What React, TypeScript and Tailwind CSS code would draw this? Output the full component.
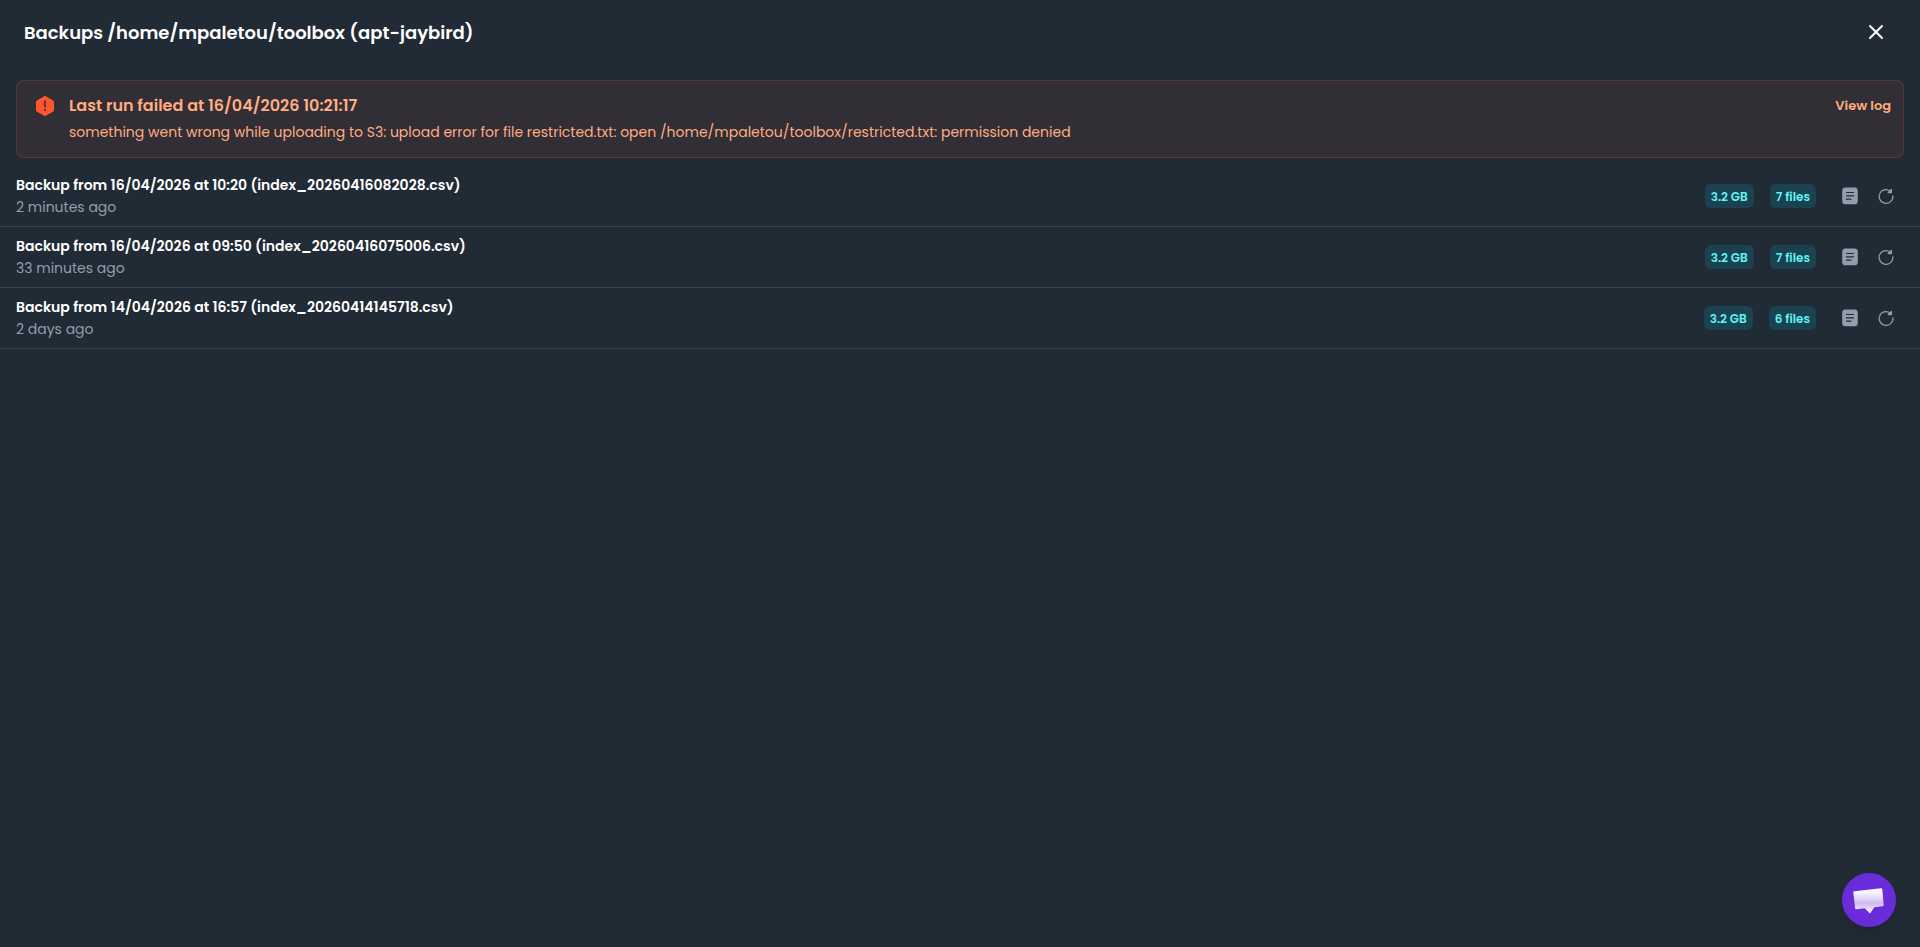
import React from 'react';
import { X } from 'lucide-react';

const backups = [
    { file: 'index_20260416082028.csv', date: '16/04/2026 at 10:20', ago: '2 minutes ago', size: '3.2 GB', files: '7 files' },
    { file: 'index_20260416075006.csv', date: '16/04/2026 at 09:50', ago: '33 minutes ago', size: '3.2 GB', files: '7 files' },
    { file: 'index_20260414145718.csv', date: '14/04/2026 at 16:57', ago: '2 days ago', size: '3.2 GB', files: '6 files' },
];

function DangerIcon() {
    return (
        <svg viewBox="0 0 24 24" className="h-[26px] w-6 shrink-0" aria-hidden="true">
            <path
                fill="#ff5630"
                fillRule="evenodd"
                d="M9.6 3.2C10.8 2.4 11.4 2 12 2s1.2.4 2.4 1.2l4.2 2.2C20.4 6.500 21 7 21 8.600v6.800c0 1.600-.6 2.100-2.400 3.200l-4.200 2.200C13.200 21.600 12.600 22 12 22s-1.200-.4-2.400-1.200l-4.200-2.200C3.600 17.500 3 17 3 15.400V8.600c0-1.600.6-2.100 2.400-3.200zM12 6.250a.75.75 0 0 1 .75.75v6a.75.75 0 0 1-1.500 0V7a.75.75 0 0 1 .75-.75M12 17a1 1 0 1 0 0-2 1 1 0 0 0 0 2"
                clipRule="evenodd"
            />
        </svg>
    );
}

function LogIcon() {
    return (
        <svg viewBox="0 0 20 20" className="size-5" aria-hidden="true">
            <rect x="2.200" y="1.500" width="15.600" height="16.800" rx="3.400" fill="currentColor" />
            <path d="M6.500 6.500h7M6.500 9.900h7M6.500 13.200h4.400" stroke="#212b36" strokeWidth="1.200" strokeLinecap="round" />
        </svg>
    );
}

function RestoreIcon() {
    return (
        <svg viewBox="0 0 20 20" className="size-5" fill="none" stroke="currentColor" strokeWidth="1.250" strokeLinecap="round" strokeLinejoin="round" aria-hidden="true">
            <path d="M15.400 6.100A6.900 6.900 0 1 0 16.900 9.800" />
            <path d="M15.400 3.400v3.100h-3.200z" fill="currentColor" />
        </svg>
    );
}

function Badge({ children }: any) {
    return (
        <span className="inline-flex h-6 items-center rounded-md bg-[#00b8d9]/16 px-1.5 text-xs leading-[17px] font-semibold whitespace-nowrap text-[#61f3f3]">
            {children}
        </span>
    );
}

export default function App() {
    return (
        <div className="flex min-h-screen flex-col bg-[#212b36] font-['Poppins','Inter',sans-serif] text-white">
            <header className="flex h-16 items-center justify-between px-6">
                <h1 className="text-lg leading-[27px] font-semibold">Backups /home/mpaletou/toolbox (apt-jaybird)</h1>
                <button type="button" aria-label="Close" className="flex size-10 items-center justify-center">
                    <X size={24} strokeWidth={2} />
                </button>
            </header>

            <div role="alert" className="mx-4 mt-4 mb-2 flex gap-3 rounded-lg border border-[#ff5630]/20 bg-[#ff5630]/8 py-3 pr-3 pl-4 text-[#ffac82]">
                <DangerIcon />
                <div className="grow">
                    <h2 className="text-base leading-[26px] font-semibold">Last run failed at 16/04/2026 10:21:17</h2>
                    <p className="text-sm leading-[26px]">
                        something went wrong while uploading to S3: upload error for file restricted.txt: open /home/mpaletou/toolbox/restricted.txt: permission denied
                    </p>
                </div>
                <button type="button" className="h-[26px] self-start text-[13px] font-semibold whitespace-nowrap">View log</button>
            </div>

            <ul>
                {backups.map((b) => (
                    <li key={b.file} className="flex items-center gap-4 border-b border-[#919eab]/20 px-4 py-2">
                        <div className="grow text-sm leading-[22px]">
                            <p className="font-semibold">Backup from {b.date} ({b.file})</p>
                            <p className="text-[#919eab]">{b.ago}</p>
                        </div>
                        <Badge>{b.size}</Badge>
                        <Badge>{b.files}</Badge>
                        <div className="flex text-[#919eab]">
                            <button type="button" aria-label="View log" className="flex size-9 items-center justify-center"><LogIcon /></button>
                            <button type="button" aria-label="Restore" className="flex size-9 items-center justify-center"><RestoreIcon /></button>
                        </div>
                    </li>
                ))}
            </ul>

            <button type="button" aria-label="Open chat" className="fixed right-6 bottom-5 flex size-[54px] items-center justify-center rounded-full bg-[#6a2bd9] shadow-lg">
                <svg viewBox="0 0 54 54" className="size-full" aria-hidden="true">
                    <defs>
                        <linearGradient id="bubble" x1="0" y1="0" x2="0" y2="1">
                            <stop offset="0" stopColor="#fff" />
                            <stop offset="0.200" stopColor="#f6f1fc" />
                            <stop offset="0.600" stopColor="#cdb9f0" />
                            <stop offset="0.800" stopColor="#e6dbf8" />
                            <stop offset="1" stopColor="#fff" />
                        </linearGradient>
                    </defs>
                    <path d="M12.300 18.200 39 15.200q1.200-.1 1.300 1l1.400 15.800q.1 1.200-1 1.300l-8.400.9-4.300 6.300-5.400-5.200-8.200.900q-1.200.1-1.300-1l-1.800-15.800q-.1-1.100 1-1.200z" fill="url(#bubble)" />
                </svg>
            </button>
        </div>
    );
}
